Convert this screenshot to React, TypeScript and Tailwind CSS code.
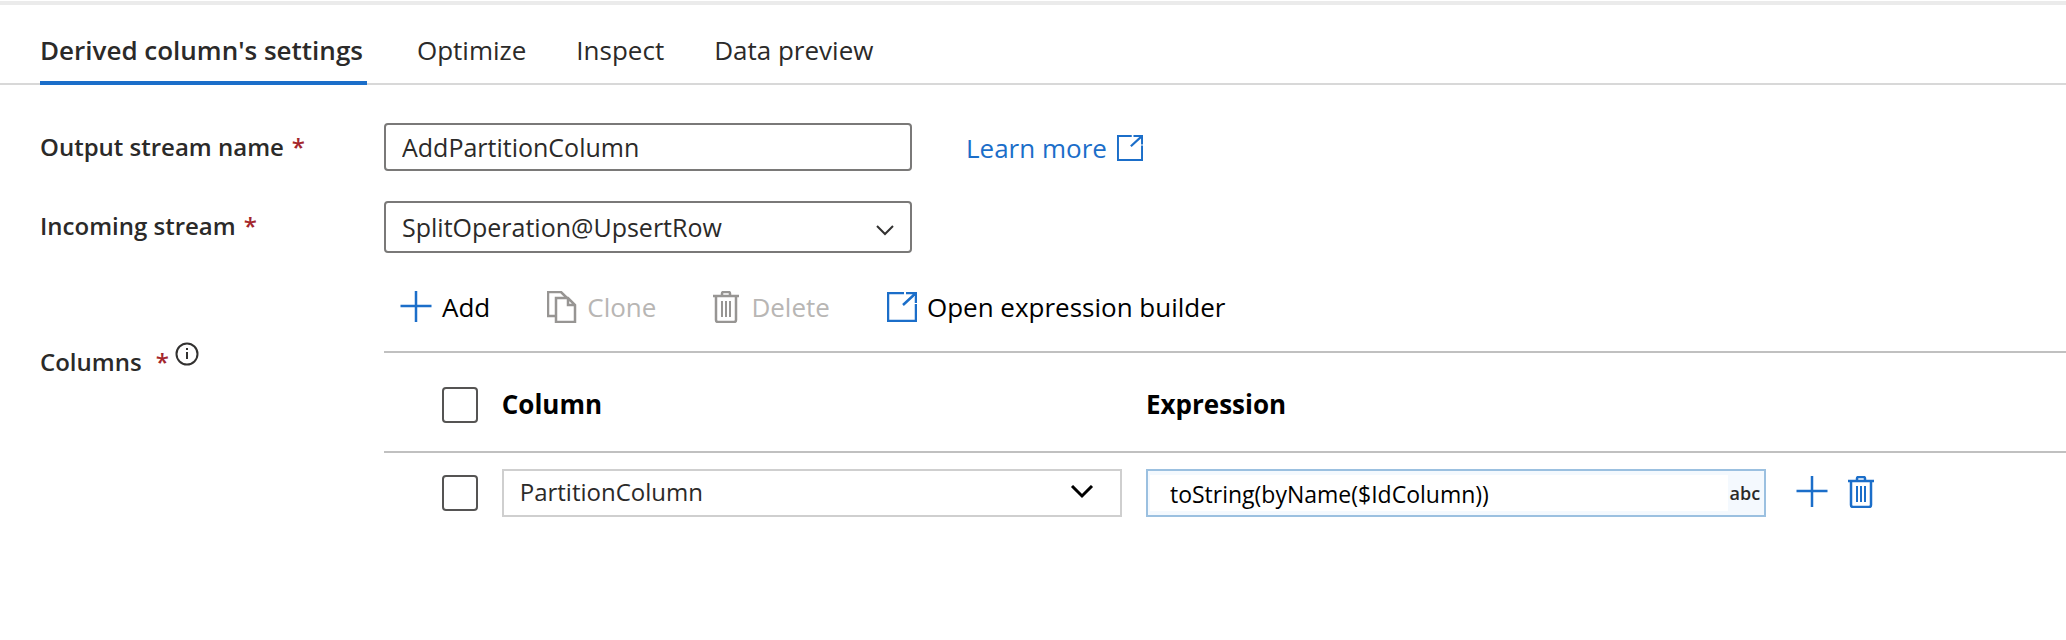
import React from 'react';

const tabs = ["Derived column's settings", 'Optimize', 'Inspect', 'Data preview'];

const PlusIcon = () => (
  <svg width="32" height="32" viewBox="0 0 32 32" fill="none" stroke="#1b6ec9" strokeWidth="2.5" aria-hidden="true">
    <path d="M16 0V31M0.500 15H31.500" />
  </svg>
);

const TrashIcon = () => (
  <svg width="26" height="32" viewBox="0 0 26 32" fill="none" stroke="currentColor" strokeWidth="2.5" aria-hidden="true">
    <path d="M0 5H26M9 5V2.500Q9 1 10.500 1H15.500Q17 1 17 2.500V5M3 5V29Q3 31 5 31H21Q23 31 23 29V5" />
    <path d="M9 10V26M13 10V26M17 10V26" strokeWidth="2" />
  </svg>
);

const CloneIcon = () => (
  <svg width="30" height="32" viewBox="0 0 30 32" fill="none" stroke="#979593" strokeWidth="2.5" aria-hidden="true">
    <path d="M9 25H1V1H14L20 7" />
    <path d="M9 7H21L28 14V31H9ZM21 7V14H28" />
  </svg>
);

const OpenIcon = ({ className }: { className: string }) => (
  <svg className={className} viewBox="0 0 30 30" fill="none" stroke="#1b6ec9" strokeWidth="2.5" aria-hidden="true">
    <path d="M17 1H1V29H29V12" />
    <path d="M19 1H29V11M29 1L16 13" />
  </svg>
);

const InfoIcon = () => (
  <svg width="24" height="28" viewBox="0 0 24 28" fill="none" stroke="#323130" strokeWidth="2" aria-hidden="true">
    <circle cx="12" cy="14" r="10.5" />
    <path d="M12 12V19M12 8V10" />
  </svg>
);

const Required = () => <span className="ml-2 text-[#a4262c]">*</span>;

const App: React.FC = () => {
  return (
    <div className="min-h-screen overflow-hidden bg-white pt-px font-['Open_Sans',sans-serif] text-[26px] leading-9 text-[#2b2a29]">
      <div className="h-1 bg-[#ebebeb]" />

      {/* Tabs */}
      <nav role="tablist" className="flex h-20 gap-[50px] border-b-2 border-[#d8d8d8] pl-10">
        {tabs.map((tab, index) => (
          <button
            key={tab}
            role="tab"
            aria-selected={index === 0}
            className={
              index === 0
                ? 'h-20 border-b-4 border-[#1b6ec9] pt-3.5 pr-1 font-semibold whitespace-nowrap'
                : 'h-20 border-b-4 border-transparent pt-3.5 whitespace-nowrap'
            }
          >
            {tab}
          </button>
        ))}
      </nav>

      <main className="pl-10">
        {/* Stream settings */}
        <div className="mt-[38px] flex items-center">
          <label htmlFor="output-stream" className="w-[344px] shrink-0 text-2xl leading-9 font-semibold">
            Output stream name<Required />
          </label>
          <input
            id="output-stream"
            type="text"
            defaultValue="AddPartitionColumn"
            className="h-12 w-full max-w-[528px] rounded border-2 border-[#7a7978] px-4 text-[25px]"
          />
          <a href="#learn-more" className="ml-[54px] flex shrink-0 items-center gap-2.5 pt-0.5 text-[#1b6ec9]">
            Learn more
            <OpenIcon className="size-[26px]" />
          </a>
        </div>

        <div className="mt-[30px] flex items-center">
          <label htmlFor="incoming-stream" className="w-[344px] shrink-0 pb-0.5 text-2xl leading-9 font-semibold">
            Incoming stream<Required />
          </label>
          <div className="relative w-full max-w-[528px]">
            <select
              id="incoming-stream"
              className="h-[52px] w-full appearance-none rounded border-2 border-[#7a7978] px-4 text-[25px]"
            >
              <option>SplitOperation@UpsertRow</option>
            </select>
            <svg width="18" height="12" viewBox="0 0 18 12" fill="none" stroke="#323130" strokeWidth="2" className="pointer-events-none absolute top-6 right-[18px]" aria-hidden="true">
              <path d="M1 1L9 9L17 1" />
            </svg>
          </div>
        </div>

        {/* Derived columns */}
        <div className="mt-8 flex">
          <div className="flex w-[344px] shrink-0 items-start pt-[55px]">
            <span className="pt-1 text-2xl leading-9 font-semibold">
              Columns <Required />
            </span>
            <button aria-label="About columns" className="ml-1.5">
              <InfoIcon />
            </button>
          </div>

          <div className="min-w-0 grow">
            <div className="flex h-[66px] items-start gap-[57px] pt-1 pl-4 text-black">
              <button className="flex items-center gap-2.5">
                <PlusIcon />
                Add
              </button>
              <button disabled className="flex items-center gap-2.5 text-[#b8b6b4]">
                <CloneIcon />
                Clone
              </button>
              <button disabled className="flex items-center gap-3 text-[#b8b6b4]">
                <span className="text-[#979593]">
                  <TrashIcon />
                </span>
                Delete
              </button>
              <button className="flex items-center gap-2.5">
                <OpenIcon className="size-[30px]" />
                Open expression builder
              </button>
            </div>

            <table className="w-full table-fixed border-t-2 border-[#c0c0c0] text-left">
              <thead>
                <tr className="h-[100px] border-b-2 border-[#c0c0c0] text-black">
                  <th className="w-[7%] pt-1.5 pl-[58px]">
                    <input type="checkbox" aria-label="Select all columns" className="block size-9 appearance-none rounded border-2 border-[#555453]" />
                  </th>
                  <th className="w-[38.300%] pt-1 font-bold">Column</th>
                  <th className="w-[38.300%] pt-1 font-bold">Expression</th>
                  <th aria-label="Actions" />
                </tr>
              </thead>
              <tbody>
                <tr className="h-20">
                  <td className="pl-[58px]">
                    <input type="checkbox" aria-label="Select PartitionColumn" className="block size-9 appearance-none rounded border-2 border-[#555453]" />
                  </td>
                  <td className="pr-6">
                    <div className="relative">
                      <select aria-label="Column name" className="block h-12 w-full appearance-none border-2 border-[#cfcfcf] px-4 pb-0.5 text-2xl">
                        <option>PartitionColumn</option>
                      </select>
                      <svg width="24" height="14" viewBox="0 0 24 14" fill="none" stroke="black" strokeWidth="3" className="pointer-events-none absolute top-4 right-7" aria-hidden="true">
                        <path d="M2 1L12 11L22 1" />
                      </svg>
                    </div>
                  </td>
                  <td className="pr-6">
                    <div className="flex h-12 items-center border-2 border-[#9bc0e0] bg-[#f4f9fe] pl-0.5">
                      <input
                        type="text"
                        aria-label="Expression"
                        defaultValue="toString(byName($IdColumn))"
                        className="h-9 w-full min-w-0 bg-white pt-0.5 pl-5 text-[23px] text-black"
                      />
                      <span className="pr-1 pl-0.5 text-lg font-semibold">abc</span>
                    </div>
                  </td>
                  <td className="pb-0.5 pl-1.5">
                    <div className="flex items-center gap-5 text-[#1b6ec9]">
                      <button aria-label="Add column">
                        <PlusIcon />
                      </button>
                      <button aria-label="Delete column">
                        <TrashIcon />
                      </button>
                    </div>
                  </td>
                </tr>
              </tbody>
            </table>
          </div>
        </div>
      </main>
    </div>
  );
};

export default App;
